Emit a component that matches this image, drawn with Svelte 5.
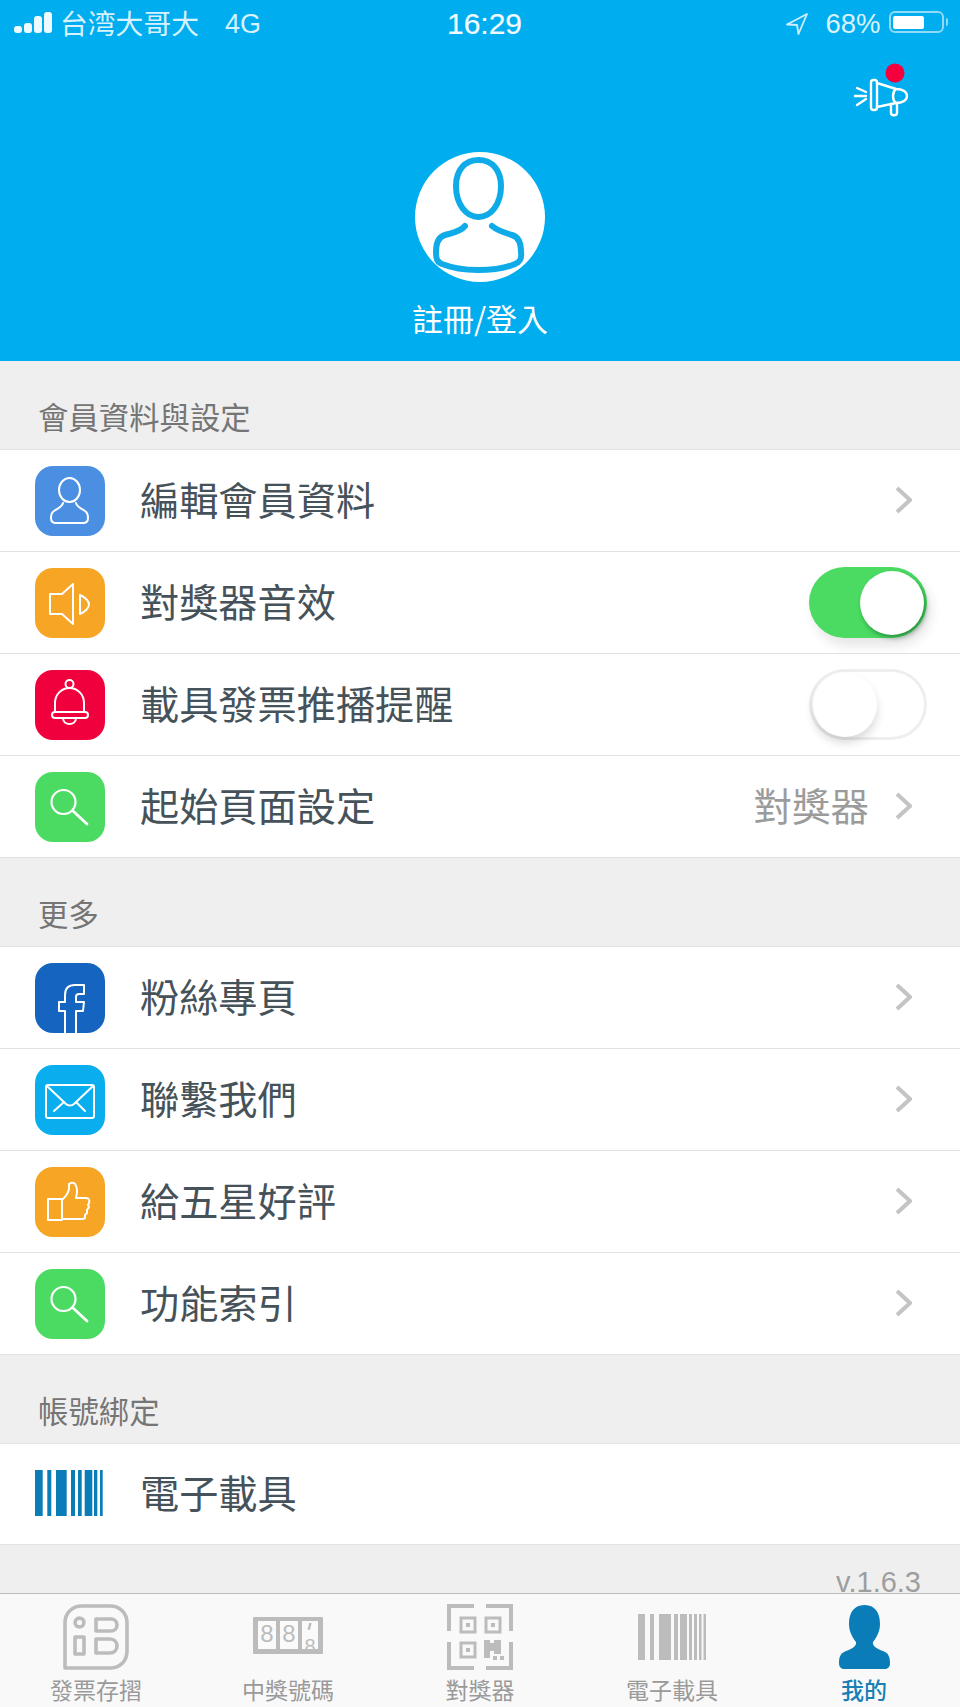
<script>
  const sections = [
    {
      title: '會員資料與設定',
      rows: [
        { icon: 'person', color: '#4a8fe2', label: '編輯會員資料', chevron: true },
        { icon: 'speaker', color: '#f6a525', label: '對獎器音效', toggle: true, on: true },
        { icon: 'bell', color: '#f0003c', label: '載具發票推播提醒', toggle: true, on: false },
        { icon: 'search', color: '#4bdb63', label: '起始頁面設定', value: '對獎器', chevron: true }
      ]
    },
    {
      title: '更多',
      rows: [
        { icon: 'facebook', color: '#1565c0', label: '粉絲專頁', chevron: true },
        { icon: 'mail', color: '#0aaeef', label: '聯繫我們', chevron: true },
        { icon: 'thumb', color: '#f6a525', label: '給五星好評', chevron: true },
        { icon: 'search', color: '#4bdb63', label: '功能索引', chevron: true }
      ]
    },
    {
      title: '帳號綁定',
      rows: [{ icon: 'barcode', label: '電子載具' }]
    }
  ];

  const tabs = [
    { icon: 'invoice', label: '發票存摺' },
    { icon: 'slots', label: '中獎號碼' },
    { icon: 'qr', label: '對獎器' },
    { icon: 'tabbar', label: '電子載具' },
    { icon: 'me', label: '我的', active: true }
  ];

  const signal = [7, 10, 17, 21];
  const rowBars = [[0, 7.7], [12.3, 4], [21, 10.7], [36, 4], [43, 3.7], [49.7, 7.6], [59, 3.3], [65, 2.7]];
  const tabBars = [[0, 7], [12, 4], [21, 12], [36, 4], [42, 7], [51, 3], [56, 3], [61, 2.5], [65.5, 2.5]];
</script>

<div class="page">
  <header class="hero">
    <div class="status">
      <div class="status-left">
        <div class="signal">
          {#each signal as h}
            <span style="height: {h}px"></span>
          {/each}
        </div>
        <span class="carrier">台湾大哥大</span>
        <span class="net">4G</span>
      </div>
      <div class="time">16:29</div>
      <div class="status-right">
        <svg width="22" height="22" viewBox="0 0 22 22" fill="none" stroke="#cdeefc" stroke-width="1.8" stroke-linejoin="round">
          <path d="M21 1 L1 11.5 L11 12 L12.5 21 Z" />
        </svg>
        <span class="battery-pct">68%</span>
        <div class="battery"><span></span></div>
        <i class="nub"></i>
      </div>
    </div>

    <div class="notice">
      <svg width="80" height="70" viewBox="0 0 80 70" fill="none" stroke="#fff" stroke-width="2.4" stroke-linecap="round" stroke-linejoin="round">
        <path d="M15 41 H26 M17 33 L26 37 M17 50 L26 44" />
        <rect x="31" y="25" width="6" height="30" rx="2.5" />
        <path d="M37 28 L56 34 C63 34 67 37 67 41 C67 45 63 48 56 48 L37 52" />
        <path d="M56 34 C52 37 52 45 56 48" />
        <path d="M51 49 L51 58 C51 61 57 61 57 58 L57 48" />
        <circle cx="55" cy="18" r="9.5" fill="#f5003d" stroke="none" />
      </svg>
    </div>

    <svg class="avatar" width="160" height="150" viewBox="0 0 160 150" fill="none" stroke="#0fabe9" stroke-width="6" stroke-linecap="round">
      <circle cx="80" cy="77" r="65" fill="#fff" stroke="none" />
      <path d="M78.5 20 C92 20 101 30 101 46 C101 64 91 77 78.5 77 C66 77 56 64 56 46 C56 30 65 20 78.5 20 Z" />
      <path d="M65 86 C60 92 52 93 45 95 C38 97 36 103 36 112 C36 119 37 122 42 124 C52 128 66 130 78 130 C92 130 106 128 115 124 C120 122 122 119 121 112 C121 103 119 97 112 95 C105 93 98 91 92 86" />
    </svg>
    <div class="login">註冊/登入</div>
  </header>

  <main>
    {#each sections as section}
      <div class="section-title">{section.title}</div>
      <ul class="list">
        {#each section.rows as row}
          <li class="row" class:short={row.icon === 'barcode'}>
            {#if row.icon === 'barcode'}
              <svg class="icon bars" width="70" height="46" viewBox="0 0 70 46" fill="#0a7db9">
                {#each rowBars as b}
                  <rect x={b[0]} y="0" width={b[1]} height="46" />
                {/each}
              </svg>
            {:else}
              <div class="icon tile" style="background: {row.color}">
                {@render glyph(row.icon)}
              </div>
            {/if}
            <span class="label">{row.label}</span>
            {#if row.value}
              <span class="value">{row.value}</span>
            {/if}
            {#if row.chevron}
              <svg class="chevron" width="17" height="28" viewBox="0 0 17 28" fill="none" stroke="#c4c4c4" stroke-width="4">
                <path d="M2 2 L15 14 L2 26" />
              </svg>
            {/if}
            {#if row.toggle}
              <div class="toggle" class:on={row.on}><span></span></div>
            {/if}
          </li>
        {/each}
      </ul>
    {/each}
    <div class="version">v.1.6.3</div>
  </main>

  <nav class="tabs">
    {#each tabs as tab}
      <div class="tab" class:active={tab.active}>
        <div class="tab-icon">{@render tabGlyph(tab.icon)}</div>
        <span>{tab.label}</span>
      </div>
    {/each}
  </nav>
</div>

{#snippet glyph(name)}
  <svg width="70" height="70" viewBox="0 0 70 70" fill="none" stroke="#fff" stroke-width="2" stroke-linecap="round" stroke-linejoin="round">
    {#if name === 'person'}
      <ellipse cx="34.5" cy="24" rx="10.5" ry="12" />
      <path d="M28 37 C27 41 22 43 19 45 C16 47 16 50 16 52 C16 55 18 57 21 57 H48 C51 57 53 55 53 52 C53 50 53 47 50 45 C47 43 42 41 41 37" />
    {:else if name === 'speaker'}
      <path d="M15 26 H27 L38 16 V56 L27 46 H15 Z" />
      <path d="M45 27 C50 29 54 33 54 36.5 C54 40 50 44 45 46 Z" />
    {:else if name === 'bell'}
      <circle cx="34.5" cy="14" r="4" />
      <path d="M20 42 V33 C20 24 27 18 34.5 18 C42 18 49 24 49 33 V42" />
      <rect x="17" y="42" width="36" height="6" rx="3" />
      <path d="M28 48 C28 56 41 56 41 48" />
    {:else if name === 'search'}
      <circle cx="28.5" cy="30" r="12" stroke-width="2.2" />
      <path d="M38 39 L52 52" stroke-width="2.8" />
    {:else if name === 'facebook'}
      <path d="M30 70 V48 H24 V39 H30 V32 C30 25 34 22 40 22 H49 V31 H44 C42 31 41 32 41 34 V39 H49 L48 48 H41 V70" stroke-linecap="butt" />
    {:else if name === 'mail'}
      <rect x="11" y="20" width="48" height="33" rx="2" />
      <path d="M12 21 L31 39 C33 41 37 41 39 39 L58 21" />
      <path d="M19 46 L29 37 M41 37 L50 46" />
    {:else if name === 'thumb'}
      <rect x="13" y="32" width="14" height="21" />
      <path d="M28 32 C31 29 34 26 34 21 V17 C36 15 40 15 41 19 C43 23 42 27 41 31 H51 C54 31 55 33 54 36 L53 38 L54 40 L52 43 L52 46 L50 48 L50 51 C49 52 48 52 47 52 H28" />
    {/if}
  </svg>
{/snippet}

{#snippet tabGlyph(name)}
  {#if name === 'invoice'}
    <svg width="66" height="66" viewBox="0 0 66 66" fill="none" stroke="#bcbcbc" stroke-width="3.6" stroke-linejoin="round">
      <path d="M2 64 V19 C2 9 9 2 19 2 H47 C57 2 64 9 64 19 V47 C64 57 57 64 47 64 Z" />
      <circle cx="16.5" cy="18.5" r="4.4" />
      <rect x="12" y="33" width="9" height="17" />
      <path d="M33 15 H48 C51.5 15 54 17.5 54 21 C54 24.5 51.5 27 48 27 H33 Z" />
      <path d="M33 35 H47 C51 35 54 38 54 42 C54 46 51 49 47 49 H33 Z" />
    </svg>
  {:else if name === 'slots'}
    <svg class="slots" width="70" height="37" viewBox="0 0 70 37">
      <rect width="70" height="37" fill="#bcbcbc" rx="1" />
      <rect x="5" y="4" width="18" height="28" fill="#fafafa" />
      <rect x="27" y="4" width="18" height="28" fill="#fafafa" />
      <rect x="49" y="4" width="16" height="28" fill="#fafafa" />
      <text x="14" y="25" class="slot-digit">8</text>
      <text x="36" y="25" class="slot-digit">8</text>
      <text x="57" y="36" class="slot-digit small">8</text>
      <rect x="49" y="32" width="16" height="5" fill="#bcbcbc" />
      <rect x="55.5" y="6" width="2.4" height="7" fill="#bcbcbc" transform="rotate(14 57 9)" />
    </svg>
  {:else if name === 'qr'}
    <svg width="66" height="66" viewBox="0 0 66 66" fill="none" stroke="#bcbcbc" stroke-width="4">
      <path d="M2 27 V2 H27 M39 2 H64 V27 M2 38 V64 H27 M64 38 V64 H39" />
      <rect x="14" y="14" width="14" height="14" stroke-width="3" />
      <rect x="39" y="14" width="14" height="14" stroke-width="3" />
      <rect x="14" y="39" width="14" height="14" stroke-width="3" />
      <g fill="#bcbcbc" stroke="none">
        <rect x="19" y="19" width="4" height="4" />
        <rect x="44" y="19" width="4" height="4" />
        <rect x="19" y="44" width="4" height="4" />
        <path d="M37 36 H43 V39 H47 V36 H54 V50 H47 V47 H43 V54 H37 Z" />
        <rect x="46" y="52" width="4" height="4" />
        <rect x="53" y="52" width="4" height="4" />
      </g>
    </svg>
  {:else if name === 'tabbar'}
    <svg width="68" height="46" viewBox="0 0 68 46" fill="#bcbcbc">
      {#each tabBars as b}
        <rect x={b[0]} y="0" width={b[1]} height="46" />
      {/each}
    </svg>
  {:else if name === 'me'}
    <svg width="51" height="64" viewBox="0 0 51 64" fill="#0a7db9">
      <path d="M25.5 0 C37 0 41 9 41 19 C41 27 37 33 34 37 C33 41 38 44 44 46 C50 48 51 53 51 58 C51 62 49 64 45 64 H6 C2 64 0 62 0 58 C0 53 1 48 7 46 C13 44 18 41 17 37 C14 33 10 27 10 19 C10 9 14 0 25.5 0 Z" />
    </svg>
  {/if}
{/snippet}

<style>
  :global(body) {
    margin: 0;
    background: #efefef;
  }

  .page {
    width: 960px;
    height: 1707px;
    overflow: hidden;
    display: flex;
    flex-direction: column;
    background: #efefef;
    font-family: "Noto Sans CJK TC", "Liberation Sans", sans-serif;
  }

  /* header */
  .hero {
    height: 361px;
    flex: none;
    background: #00adef;
    color: #fff;
    display: flex;
    flex-direction: column;
    align-items: center;
  }

  .status {
    align-self: stretch;
    height: 48px;
    display: grid;
    grid-template-columns: 1fr auto 1fr;
    align-items: center;
    padding: 0 12px 0 14px;
    color: #d8f2fd;
    font-family: "Liberation Sans", "Noto Sans CJK TC", sans-serif;
  }

  .status-left,
  .status-right {
    display: flex;
    align-items: center;
  }

  .status-right {
    justify-content: flex-end;
  }

  .signal {
    display: flex;
    align-items: flex-end;
    gap: 2.5px;
    height: 22px;
    margin-bottom: 4px;
  }

  .signal span {
    width: 7.5px;
    border-radius: 3px;
    background: #eefaff;
  }

  .carrier {
    margin-left: 8.5px;
    padding-bottom: 4px;
    font-size: 27.8px;
    line-height: 44px;
    font-family: "Noto Sans CJK TC", sans-serif;
    font-weight: 400;
  }

  .net {
    margin-left: 26px;
    font-size: 27px;
  }

  .time {
    margin-left: 7px;
    font-size: 30px;
    font-weight: 400;
    color: #f2fbff;
    -webkit-text-stroke: 0.2px #f2fbff;
  }

  .status-right span.battery-pct {
    margin-left: 17px;
    font-size: 27.5px;
  }

  .battery {
    margin: 0 0 4px 8px;
    width: 55px;
    height: 22px;
    box-sizing: border-box;
    border: 2.5px solid #8fdaf7;
    border-radius: 6px;
    padding: 2.5px;
    display: flex;
  }

  .battery span {
    width: 31px;
    background: #fff;
    border-radius: 2px;
  }

  .nub {
    width: 2.5px;
    height: 8px;
    margin: 0 0 4px 2px;
    background: #8fdaf7;
    border-radius: 0 2px 2px 0;
  }

  .notice {
    align-self: stretch;
    height: 92px;
    box-sizing: border-box;
    padding: 7px 40px 0 0;
    display: flex;
    justify-content: flex-end;
  }

  .avatar {
    flex: none;
  }

  .login {
    margin-top: 6px;
    font-size: 31px;
    line-height: 44px;
    font-weight: 400;
  }

  /* list */
  main {
    flex: 1;
  }

  .section-title {
    height: 88px;
    box-sizing: border-box;
    padding: 0 38px 13px;
    display: flex;
    align-items: flex-end;
    font-size: 30.4px;
    line-height: 40px;
    color: #757575;
  }

  .list {
    list-style: none;
    margin: 0;
    padding: 0;
    background: #fff;
    border-top: 1px solid #e2e2e2;
  }

  .row {
    height: 102px;
    box-sizing: border-box;
    padding: 0 33px 0 35px;
    display: flex;
    align-items: center;
    border-bottom: 1px solid #e2e2e2;
  }

  .row.short {
    height: 101px;
  }

  .icon {
    flex: none;
    width: 70px;
  }

  .bars {
    margin-bottom: 3px;
  }

  .tile {
    height: 70px;
    border-radius: 18px;
    overflow: hidden;
  }

  .tile svg {
    display: block;
  }

  .label {
    margin-left: 35px;
    padding-bottom: 6px;
    flex: 1;
    font-size: 39.2px;
    color: #46525a;
  }

  .value {
    padding-bottom: 6px;
    font-size: 38.5px;
    color: #9b9b9b;
    margin-right: 26px;
  }

  .chevron {
    flex: none;
    margin: 0 15px 2px 0;
  }

  .toggle {
    width: 118px;
    height: 71px;
    box-sizing: border-box;
    padding: 4px;
    border-radius: 36px;
    background: #fff;
    box-shadow: inset 0 0 0 3px #eeeeee;
    display: flex;
    justify-content: flex-start;
  }

  .toggle.on {
    background: #4bdb63;
    box-shadow: 4px 8px 12px rgba(0, 0, 0, 0.1);
    justify-content: flex-end;
    padding-right: 3px;
  }

  .toggle span {
    width: 64px;
    height: 64px;
    border-radius: 50%;
    background: #fff;
    box-shadow: 0 6px 10px rgba(0, 0, 0, 0.15);
  }

  .toggle.on span {
    box-shadow: 2px 3px 5px rgba(0, 60, 20, 0.45);
  }

  .version {
    height: 48px;
    box-sizing: border-box;
    padding-right: 39px;
    text-align: right;
    font-family: "Liberation Sans", sans-serif;
    font-size: 29px;
    line-height: 74px;
    color: #9e9e9e;
  }

  /* bottom tabs */
  .tabs {
    flex: none;
    height: 114px;
    box-sizing: border-box;
    border-top: 1px solid #bdbdbd;
    background: #f9f9f9;
    display: grid;
    grid-template-columns: repeat(5, 1fr);
  }

  .tab {
    display: flex;
    flex-direction: column;
    align-items: center;
    padding-top: 11px;
    font-size: 23px;
    line-height: 30px;
    color: #9a9a9a;
  }

  .tab.active {
    color: #1a7fb5;
    font-weight: 500;
  }

  .tab-icon {
    height: 64px;
    display: flex;
    align-items: center;
    justify-content: center;
    margin-bottom: 5px;
  }

  .slots {
    margin-bottom: 4px;
  }

  .slot-digit {
    font-family: "Liberation Sans", sans-serif;
    font-size: 24px;
    fill: #bcbcbc;
    text-anchor: middle;
  }

  .slot-digit.small {
    font-size: 20px;
  }
</style>
